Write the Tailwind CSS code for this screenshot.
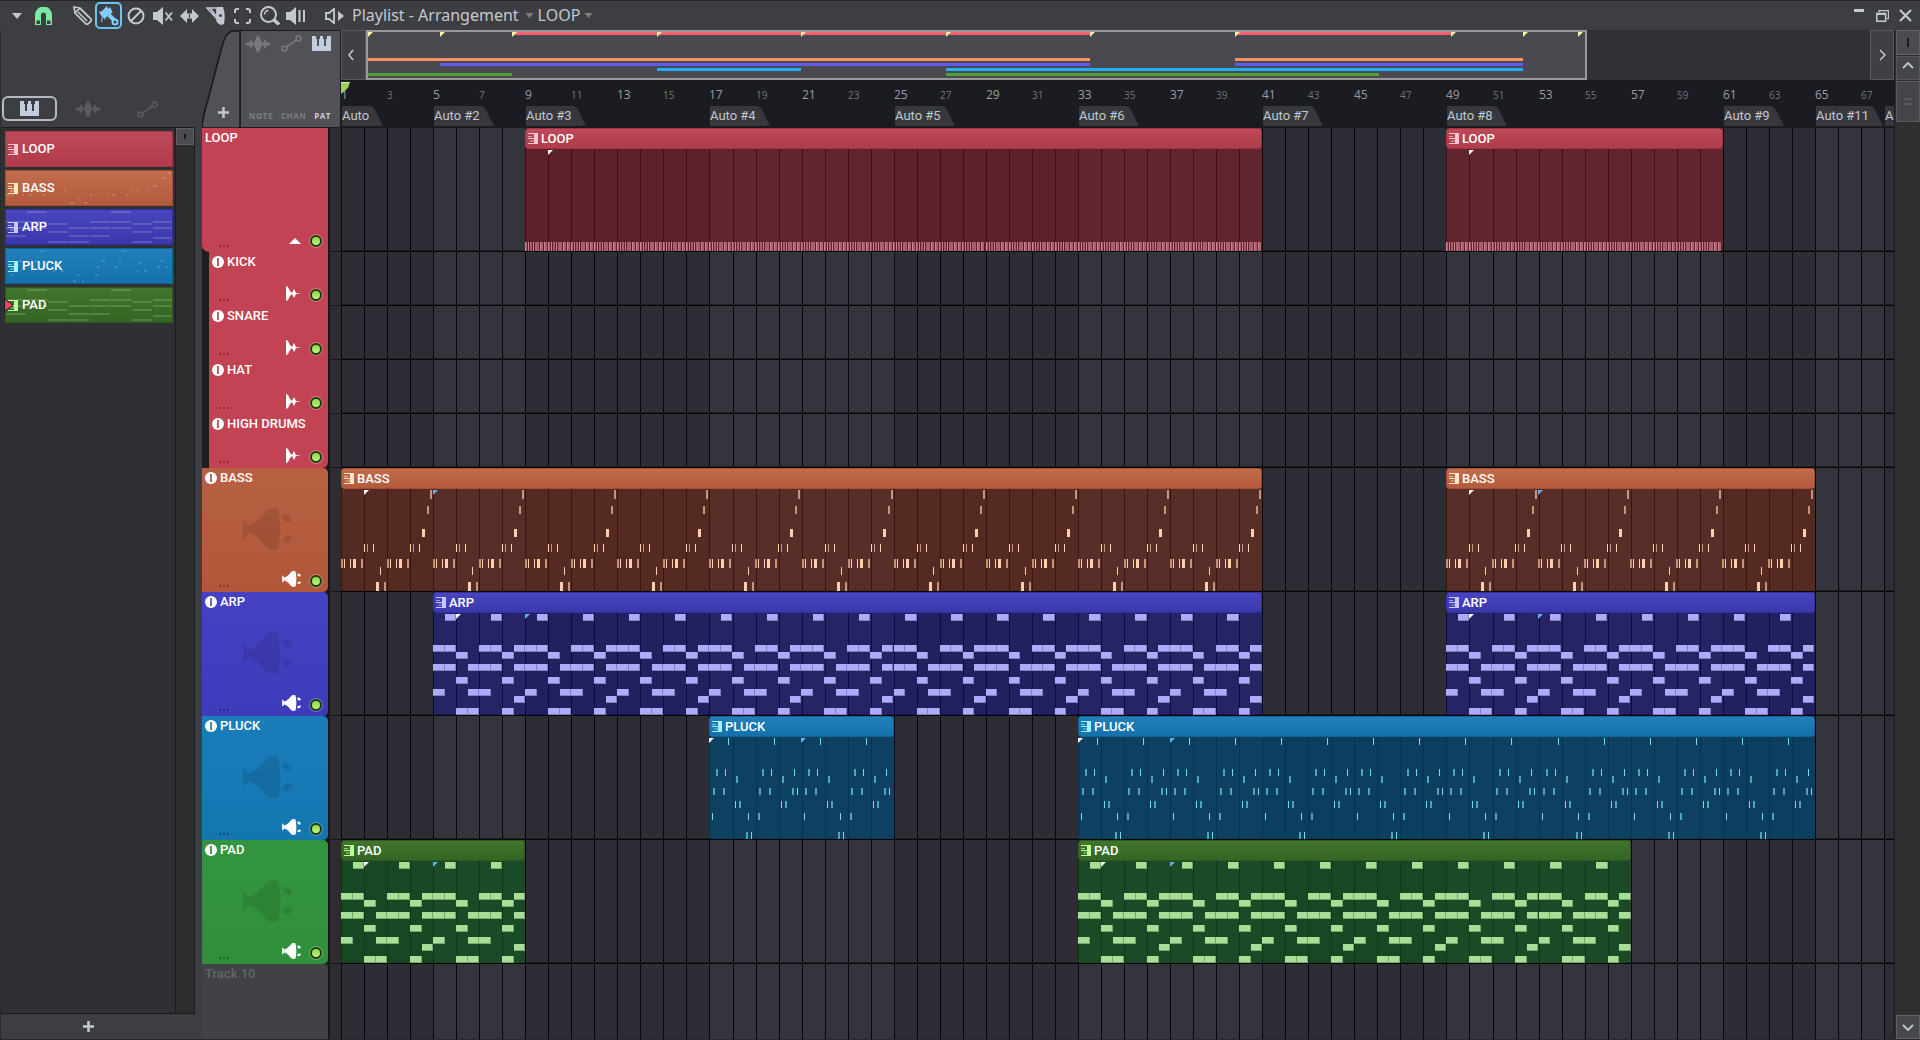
<!DOCTYPE html>
<html lang="en">
<head>
<meta charset="utf-8">
<meta name="viewport" content="width=device-width, initial-scale=1">
<title>Playlist - Arrangement</title>
<script src="https://cdn.jsdelivr.net/npm/@tailwindcss/browser@4"></script>
</head>
<body class="h-screen overflow-hidden bg-[#3d3e41] font-['Roboto',sans-serif] text-[#c3c8d0]">

<!-- Shared symbols -->
<svg class="hidden" aria-hidden="true">
  <symbol id="piano" viewBox="0 0 19 15"><path fill="currentColor" d="M0 0h4v3h1v7h2V3h1V0h3v3h1v7h2V3h1V0h4v15H0z"/></symbol>
  <symbol id="wave" viewBox="0 0 26 18"><path fill="currentColor" d="M0 9l3-2 1 1 2-4 2 4h1l2-5 2-3 2 3 2 5h1l2-4 2 4 1-1 3 2-3 2-1-1-2 4-2-4h-1l-2 5-2 3-2-3-2-5H8l-2 4-2-4-1 1z"/></symbol>
  <symbol id="auto" viewBox="0 0 21 17"><g fill="none" stroke="currentColor" stroke-width="1.600"><circle cx="3.500" cy="13.500" r="2.500"/><circle cx="17.500" cy="3.500" r="2.500"/><path d="M5.500 12l10-7"/></g></symbol>
  <symbol id="pat" viewBox="0 0 10 11"><path fill="currentColor" d="M6 0h4v11H6z"/><path stroke="currentColor" d="M0 .5h7M0 5.500h7M0 10.500h7"/><path stroke="currentColor" opacity=".7" d="M0 3.500h4M2 8h4"/></symbol>
  <symbol id="plug" viewBox="0 0 49 42"><path fill="currentColor" d="M0 11l6 6C14 15 20 6 25 1c3-1 8-1 10 0 3 12 3 28 0 40-2 1-7 1-10 0-5-5-11-14-19-16l-6 6z"/><path fill="currentColor" d="M40 7c5-1 9 2 9 7-5 1-10 0-9-7zM40 34c-1-5 4-8 9-6 0 5-4 8-9 6z"/></symbol>
  <symbol id="clip" viewBox="0 0 15 15"><path fill="currentColor" d="M0 0l2 1 2 4 2 2 2-4 2 4 5 .5-5 .5-2 4-2-4-2 2-2 4-2 1z"/></symbol>
  <symbol id="mute" viewBox="0 0 12 12"><circle cx="6" cy="6" r="6" fill="#fff"/><path d="M6 2v8" stroke="currentColor" stroke-width="1.400"/></symbol>
  <symbol id="down" viewBox="0 0 10 6"><path fill="currentColor" d="M0 0h10L5 6z"/></symbol>
</svg>

<div class="flex h-full flex-col border-y border-[#26272a]">

  <!-- Toolbar -->
  <header class="flex h-[29px] shrink-0 items-center justify-between bg-[#3d3e41]">
    <div class="flex items-center">
      <button aria-label="Menu" class="flex w-[33px] justify-center"><svg class="h-[6px] w-[10px]"><use href="#down"/></svg></button>
      <button aria-label="Snap" class="flex w-[40px] pl-[2px] text-[#7ce9a0]"><svg width="17" height="18" viewBox="0 0 17 18"><path fill="currentColor" d="M0 18V8a8.500 8.500 0 0 1 17 0v10h-6V8a2.500 2.500 0 0 0-5 0v10z"/><path fill="#3d3e41" d="M1.500 13.500H5V17H1.500zM12 13.500h3.500V17H12z"/></svg></button>
      <button aria-label="Draw" class="flex w-[22px]"><svg width="19" height="19" viewBox="0 0 19 19" fill="none" stroke="currentColor" stroke-width="1.700"><path d="M1 1l6 1 11 11c1 2-3 6-5 5L2 7zM5 6l9 9M8 3.500l8 8M2 7l5-5"/></svg></button>
      <button aria-label="Paint" class="flex h-[27px] w-[27px] items-center justify-center rounded-[5px] border-2 border-[#6fc3f2] text-[#7fd0ff]"><svg width="21" height="20" viewBox="0 0 21 20"><path fill="currentColor" d="M1 6l3-1 5-5 1 3 2-2 3 6-7 6-1 1-2-3-1 5H3l1-5z"/><path stroke="#3d3e41" stroke-width="1.200" d="M7 13l9-7"/><path stroke="currentColor" stroke-width="4" d="M11 9l5 5"/><circle cx="17" cy="16" r="2.500" fill="none" stroke="currentColor" stroke-width="2"/></svg></button>
      <button aria-label="Delete" class="flex w-[31px] pl-[5px]"><svg width="18" height="18" viewBox="0 0 18 18" fill="none" stroke="currentColor" stroke-width="2"><circle cx="9" cy="9" r="7.500"/><path d="M4 14L14 4"/></svg></button>
      <button aria-label="Mute" class="flex w-[27px]"><svg width="20" height="18" viewBox="0 0 20 18"><path fill="currentColor" d="M0 5h4l6-5v18l-6-5H0z"/><path stroke="currentColor" stroke-width="1.800" d="M12.500 5.500l6.500 8M19 5.500l-6.500 8"/></svg></button>
      <button aria-label="Slip" class="flex w-[26px]"><svg width="19" height="14" viewBox="0 0 19 14"><path fill="currentColor" d="M0 7l7-7v4.500h5V0l7 7-7 7V9.500H7V14zM9 4v6h1V4z"/></svg></button>
      <button aria-label="Slice" class="flex w-[28px]"><svg width="19" height="18" viewBox="0 0 19 18"><path fill="currentColor" d="M11 0h6c2 5 2 11 1 17l-3 1c-3-1-5-3-5-6z"/><path fill="none" stroke="currentColor" stroke-width="1.500" d="M1 1h10v11zM4 1l6 8"/><circle cx="14.500" cy="8.500" r="1.500" fill="#3d3e41"/></svg></button>
      <button aria-label="Select" class="flex w-[26px]"><svg width="17" height="16" viewBox="0 0 17 16" fill="none" stroke="currentColor" stroke-width="2"><path d="M1 5V3q0-2 2-2h2M12 1h2q2 0 2 2v2M16 11v2q0 2-2 2h-2M5 15H3q-2 0-2-2v-2"/></svg></button>
      <button aria-label="Zoom" class="flex w-[26px]"><svg width="20" height="19" viewBox="0 0 20 19" fill="none" stroke="currentColor"><circle cx="8.500" cy="8.500" r="7.500" stroke-width="2"/><path stroke-width="3.500" d="M14 14l5 4.500"/><path stroke-width="1.500" d="M4.500 8.500a4 4 0 0 1 4-4"/></svg></button>
      <button aria-label="Play" class="flex w-[39px]"><svg width="20" height="18" viewBox="0 0 20 18"><path fill="currentColor" d="M0 5h4l6-5v18l-6-5H0z"/><path stroke="currentColor" stroke-width="2" d="M13.500 3v12M18 3v12"/></svg></button>
      <button aria-label="Preview" class="flex w-[27px]"><svg width="19" height="16" viewBox="0 0 19 16"><path fill="none" stroke="currentColor" stroke-width="1.800" d="M1 5h3l5-4v14l-5-4H1z"/><path fill="currentColor" d="M13 3l6 5-6 5z"/></svg></button>
      <h1 class="pb-[2px] font-['Noto_Sans'] text-[16px] leading-5 whitespace-pre">Playlist - Arrangement</h1>
      <svg class="mr-[4px] ml-[6px] h-[5px] w-[9px] text-[#7b7d82]"><use href="#down"/></svg>
      <button class="pb-[2px] font-['Noto_Sans'] text-[16px] leading-5">LOOP</button>
      <svg class="mx-[4px] h-[5px] w-[9px] text-[#7b7d82]"><use href="#down"/></svg>
    </div>
    <div class="flex items-center gap-[10px] pr-[8px]">
      <button aria-label="Minimise" class="flex h-[14px] w-[12px]"><span class="h-[3px] w-[10px] bg-[#c3cad6]"></span></button>
      <button aria-label="Restore"><svg width="13" height="12" viewBox="0 0 13 12" fill="none" stroke="currentColor"><path stroke-width="1.200" d="M3 2.500V.6h9.400v8H10.500"/><path stroke-width="1.500" d="M.8 3.500h8.800v7.800H.8z"/><path stroke-width="2" d="M.8 4h9"/></svg></button>
      <button aria-label="Close"><svg width="13" height="13" viewBox="0 0 13 13" stroke="currentColor" stroke-width="2.200"><path d="M1 1l11 11M12 1L1 12"/></svg></button>
    </div>
  </header>

  <div class="flex min-h-0 flex-1">

    <!-- Pattern picker -->
    <aside class="flex w-[202px] shrink-0 flex-col border-l border-[#2a2b2e]">
      <div class="flex h-[97px] shrink-0 items-end gap-[18px] pb-[6px] pl-px">
        <button aria-label="Patterns" class="flex h-[25px] w-[55px] items-center justify-center rounded-[6px] border-2 border-[#b4bac6] text-[#c4cddd]"><svg class="h-[15px] w-[19px]"><use href="#piano"/></svg></button>
        <button aria-label="Audio" class="flex h-[24px] w-[26px] items-center text-[#5a5b5f]"><svg class="h-[18px] w-[26px]"><use href="#wave"/></svg></button>
        <button aria-label="Automation" class="ml-[18px] flex h-[24px] items-center text-[#5a5b5f]"><svg class="h-[17px] w-[21px]"><use href="#auto"/></svg></button>
      </div>
      <div class="mr-[7px] flex min-h-0 flex-1 border-y border-r border-[#1b1c1f] bg-[#2f3034]">
        <div id="patterns" class="flex flex-1 flex-col gap-[3px] pt-[3px] pl-[4px]"></div>
        <div class="ml-[2px] w-[19px] border-l border-[#1b1c1f] bg-[#2d2e30]">
          <div class="flex h-[17px] items-center justify-center border border-[#606165] bg-[#4a4b4f]"><span class="h-[5px] w-[2px] bg-[#1b1c1f]"></span></div>
        </div>
      </div>
      <button aria-label="Add pattern" class="flex h-[25px] shrink-0 items-center pl-[82px]"><svg width="11" height="11" viewBox="0 0 11 11" stroke="currentColor" stroke-width="2.500"><path d="M5.500 0v11M0 5.500h11"/></svg></button>
    </aside>

    <!-- Arrangement -->
    <main class="flex min-w-0 flex-1 flex-col bg-[#17181d]">
      <div class="flex h-[98px] shrink-0 bg-[#3d3e41]">
        <div class="grid w-[38px] shrink-0">
          <svg class="col-start-1 row-start-1 h-full w-full" viewBox="0 0 38 98"><path fill="#515256" stroke="#17181b" stroke-width="1.500" d="M0 98C0 88 4 78 8 62L18 24C22 8 25 1 32 1h6v97z"/></svg>
          <button aria-label="Add track" class="col-start-1 row-start-1 flex items-end justify-center pb-[10px] pl-[5px]"><svg width="11" height="11" viewBox="0 0 11 11" stroke="currentColor" stroke-width="2.500"><path d="M5.500 0v11M0 5.500h11"/></svg></button>
        </div>
        <div class="flex w-[101px] shrink-0 flex-col justify-between border-x border-y border-[#1b1c1f] bg-[#515256] pt-[4px] pb-[5px]">
          <div class="flex items-start gap-[10px] pl-[4px] text-[#77797f]">
            <button aria-label="Audio clips"><svg class="h-[18px] w-[26px]"><use href="#wave"/></svg></button>
            <button aria-label="Automation clips"><svg class="h-[17px] w-[21px]"><use href="#auto"/></svg></button>
            <button aria-label="Pattern clips" class="pt-px text-[#c4cddd]"><svg class="h-[15px] w-[19px]"><use href="#piano"/></svg></button>
          </div>
          <div class="flex gap-[8px] pl-[8px] font-['Open_Sans'] text-[8px] leading-3 font-bold tracking-[0.5px] text-[#7c7e83]">
            <button>NOTE</button><button>CHAN</button><button class="text-[#cdd0d5]">PAT</button>
          </div>
        </div>
        <div class="flex min-w-0 flex-1 flex-col">
          <div class="flex h-[50px] bg-[#303134]">
            <button aria-label="Scroll left" class="flex w-[25px] shrink-0 items-center border border-[#58595d] bg-[#3f4043] pl-[6px]"><svg width="6" height="12" viewBox="0 0 6 12" fill="none" stroke="currentColor" stroke-width="1.500"><path d="M5 1L1 6l4 5"/></svg></button>
            <div class="min-w-0 flex-1"><div id="overview" class="relative h-[50px] w-[81.2%] border-2 border-[#98999d] bg-[#494a4f]"></div></div>
            <button aria-label="Scroll right" class="flex w-[24px] shrink-0 items-center justify-center border border-[#58595d] bg-[#3f4043]"><svg width="7" height="12" viewBox="0 0 7 12" fill="none" stroke="currentColor" stroke-width="1.500"><path d="M1 1l5 5-5 5"/></svg></button>
          </div>
          <div id="ruler" class="relative min-w-0 flex-1 overflow-hidden border-t-2 border-b-2 border-[#1a1b20] bg-[#1b1c21]"></div>
        </div>
      </div>
      <div class="relative min-h-0 flex-1 overflow-hidden bg-[#2d2d35]">
        <div id="grid" class="absolute inset-y-0 right-0 left-[139px] overflow-hidden"></div>
        <div id="tracks" class="relative flex h-full flex-col"></div>
      </div>
    </main>

    <!-- Vertical scrollbar -->
    <div class="flex w-[26px] shrink-0 flex-col gap-px border-l border-[#1b1c1f] bg-[#2e2f31] pl-px">
      <div class="flex h-[25px] items-center justify-center border border-[#606165] bg-[#4a4b4f]"><span class="h-[9px] w-[2px] bg-[#1b1c1f]"></span></div>
      <button aria-label="Scroll up" class="flex h-[24px] items-center justify-center border border-[#58595d] bg-[#444548] pb-[5px]"><svg width="12" height="7" viewBox="0 0 12 7" fill="none" stroke="currentColor" stroke-width="1.800"><path d="M1 6l5-5 5 5"/></svg></button>
      <div class="flex h-[41px] flex-col items-center justify-center gap-[3px] border border-[#58595d] bg-[#444548]"><span class="h-[2px] w-[8px] bg-[#595a5e]"></span><span class="h-[2px] w-[8px] bg-[#595a5e]"></span></div>
      <div class="flex-1"></div>
      <button aria-label="Scroll down" class="flex h-[24px] items-center justify-center border border-[#606165] bg-[#47484b]"><svg width="12" height="7" viewBox="0 0 12 7" fill="none" stroke="currentColor" stroke-width="1.800"><path d="M1 1l5 5 5-5"/></svg></button>
    </div>
  </div>
</div>

<script>
const BAR = 23.03;
const at = bar => Math.round((bar - 1) * BAR);
const el = id => document.getElementById(id);
const visible = el('ruler').clientWidth;

const markers = [[1, 'Auto'], [5, 'Auto #2'], [9, 'Auto #3'], [17, 'Auto #4'], [25, 'Auto #5'], [33, 'Auto #6'], [41, 'Auto #7'], [49, 'Auto #8'], [61, 'Auto #9'], [65, 'Auto #11'], [68, 'Auto #12']];

// Note lists: [x, y, width, height, dim] over one four-bar loop of 92 px
const row = (y, h, xs) => xs.map(([x, w = 1, dim = 0]) => [x, y, w, h, dim]);
const chordRows = [[22, [1, 5]], [53, [0, 1, 4, 5, 7]], [60, [2, 6]], [72, [0, 1, 3, 4, 5, 7]], [85, [2, 6]], [97, [0, 3, 4]], [104, [7]], [116, [2, 3, 6]]];
const chords = chordRows.flatMap(([y, us]) => us.map(u => [u * 11.5, y, 11.5, 7, 0]));
const bassNotes = [
  ...row(22, 9, [[89, 2, 1]]), ...row(38, 8, [[86, 2, 1]]), ...row(61, 8, [[81, 3]]),
  ...row(76, 8, [[23], [26, 1, 1], [32], [69], [72, 1, 1], [78]]),
  ...row(91, 9, [[0, 2, 1], [3], [9], [12, 3], [20, 2, 1], [46, 2, 1], [49], [55], [58, 3], [66, 2, 1]]),
  ...row(99, 8, [[39]]), ...row(114, 9, [[35, 3], [43, 2, 1]])];
const pluckNotes = [
  ...row(22, 7, [[19], [65]]), ...row(53, 7, [[7, 2, 1], [16], [53, 2, 1], [62], [85]]),
  ...row(60, 7, [[27, 2, 1], [73, 2, 1]]), ...row(72, 7, [[4, 2, 1], [14, 2, 1], [50, 2, 1], [60, 2, 1], [83, 2, 1], [88]]),
  ...row(85, 7, [[26], [30, 2, 1], [72], [76, 2, 1]]), ...row(97, 7, [[3], [39], [49, 2, 1]]), ...row(116, 7, [[37, 2, 1], [42]])];
const beatNotes = row(114, 9, [0, 23, 46, 69].flatMap(b => [[b, 1], [b + 1, 1, 1], [b + 3, 1], [b + 5, 2, 1], [b + 8, 1], [b + 10, 4, 1], [b + 15, 1], [b + 16, 2, 1], [b + 19, 1], [b + 20, 2, 1]]));

const kinds = {
  LOOP: { head: 'bg-[#c24354]', clip: 'border-[#a53344] bg-linear-to-b from-[#bd4a59] to-[#b03b4b]', body: 'bg-[#a40f1e]/40', icon: 'text-[#ffc4d0]', note: '#cf8090', notes: beatNotes, white: 1, dots: 'text-[#8f2535]', over: '#ff6072', y: 0 },
  BASS: { head: 'bg-linear-to-b from-[#b86042] to-[#b05839]', clip: 'border-[#a54e2f] bg-linear-to-b from-[#c26b4d] to-[#b35b3c]', body: 'bg-[#8e250a]/40', icon: 'text-[#ffe9c4]', note: '#ffcfae', notes: bassNotes, white: 1, blue: 4, dots: 'text-[#7d3a22]', over: '#ff9161', y: 26 },
  ARP: { head: 'bg-linear-to-b from-[#4442c2] to-[#3e3cba]', clip: 'border-[#312e9f] bg-linear-to-b from-[#4846bd] to-[#3b38ae]', body: 'bg-[#110ca0]/40', icon: 'text-[#c9c6ff]', note: '#afabfb', notes: chords, white: 1, blue: 4, dots: 'text-[#2a2885]', over: '#5f5bf0', y: 31 },
  PLUCK: { head: 'bg-linear-to-b from-[#1a7cb9] to-[#1476b1]', clip: 'border-[#12649b] bg-linear-to-b from-[#2080b9] to-[#1470aa]', body: 'bg-[#00446e]/75', icon: 'text-[#9ff2ff]', note: '#72dcf0', notes: pluckNotes, white: 0, blue: 4, dots: 'text-[#0d4f7c]', over: '#22adf5', y: 36 },
  PAD: { head: 'bg-linear-to-b from-[#349540] to-[#2f8f3a]', clip: 'border-[#2c5a1c] bg-linear-to-b from-[#41762d] to-[#346524]', body: 'bg-[#0e561a]/65', icon: 'text-[#b9ffa0]', note: '#a8df96', notes: chords, white: 1, blue: 4, dots: 'text-[#1d5f26]', over: '#50a038', y: 41 }
};

const tracks = [
  { name: 'LOOP', kind: 'LOOP', icon: 'fold', clips: [[9, 41], [49, 61]] },
  { name: 'KICK', kind: 'LOOP', icon: 'clip', child: true, clips: [] },
  { name: 'SNARE', kind: 'LOOP', icon: 'clip', child: true, clips: [] },
  { name: 'HAT', kind: 'LOOP', icon: 'clip', child: true, clips: [] },
  { name: 'HIGH DRUMS', kind: 'LOOP', icon: 'clip', child: true, last: true, clips: [] },
  { name: 'BASS', kind: 'BASS', icon: 'plug', clips: [[1, 41], [49, 65]] },
  { name: 'ARP', kind: 'ARP', icon: 'plug', clips: [[5, 41], [49, 65]] },
  { name: 'PLUCK', kind: 'PLUCK', icon: 'plug', clips: [[17, 25], [33, 65]] },
  { name: 'PAD', kind: 'PAD', icon: 'plug', clips: [[1, 9], [33, 57]] }
];

function clipNotes(kind, width) {
  let out = '';
  for (let i = 0; i * 4 * BAR < width; i++) {
    const base = i * 4 * BAR;
    for (const [x, y, w, h, dim] of kind.notes) {
      const left = base + x;
      if (left >= width - 1) continue;
      const wide = w > 8;
      const rx = Math.round(left), rw = Math.min(wide ? Math.round(left + w) - rx : w, width - rx);
      out += `<rect x="${rx}" y="${y - 21}" width="${rw}" height="${h}" fill="${kind.note}" opacity="${dim ? .65 : 1}"/>`;
      if (wide) out += `<path d="M${rx + rw - .5} ${y - 21}v${h}M${rx} ${y - 21.5 + h}h${rw}" stroke="#000" opacity=".25"/>`;
    }
  }
  const flag = (bar, color) => bar === undefined ? '' : `<path d="M${at(bar + 1)} 1h5l-5 5z" fill="${color}"/>`;
  return out + flag(kind.white, '#fff') + flag(kind.blue, '#5fb0ff');
}

function clip(kindName, [from, to]) {
  const k = kinds[kindName], w = at(to) - at(from);
  return `<div class="absolute inset-y-0 flex flex-col" style="left:${at(from)}px;width:${w}px">
    <div class="flex h-[21px] shrink-0 items-center gap-[3px] rounded-[3px] border ${k.clip} pl-[2px] text-[13px] leading-none font-medium text-white">
      <svg class="h-[11px] w-[10px] ${k.icon}"><use href="#pat"/></svg><span>${kindName}</span>
    </div>
    <svg class="w-full flex-1 ${k.body}">${clipNotes(k, w)}</svg>
  </div>`;
}

const led = `<button aria-label="Track on" class="h-[12px] w-[12px] rounded-full border-2 border-[#1f4210] bg-linear-to-b from-[#93d84a] to-[#bdf07c] ring-1 ring-white/30"></button>`;

function trackRow(t) {
  const k = kinds[t.kind];
  const icons = {
    fold: '<svg class="mb-[3px] h-[6px] w-[12px] text-white" viewBox="0 0 12 6"><path fill="currentColor" d="M0 6L6 0l6 6z"/></svg>',
    clip: '<svg class="h-[15px] w-[15px] text-white"><use href="#clip"/></svg>',
    plug: '<svg class="h-[16px] w-[19px] text-white"><use href="#plug"/></svg>'
  };
  const corners = t.child ? (t.last ? 'rounded-br-[6px]' : '') : t.icon === 'fold' ? 'rounded-tr-[5px] rounded-bl-[7px]' : 'rounded-r-[5px]';
  const under = t.icon === 'fold' ? 'bg-linear-to-r from-[#1c1e20] from-5% to-[#c24354] to-5%' : t.child ? 'bg-[#1c1e20]' : 'bg-[#17171c]';
  return `<div class="flex shrink-0 ${t.child ? 'h-[54px]' : 'h-[124px]'}">
    <div class="flex w-[126px] shrink-0 ${under} ${t.child ? 'pl-[7px]' : ''}">
      <div class="relative flex flex-1 flex-col justify-between ${k.head} ${corners}">
        ${t.icon === 'plug' ? '<svg class="absolute top-[40px] left-[41px] h-[42px] w-[49px] text-black/10"><use href="#plug"/></svg>' : ''}
        <div class="flex items-center gap-[3px] pt-[2px] pl-[3px] text-[13px] leading-4 font-medium text-white">
          ${t.icon === 'fold' ? '' : '<button aria-label="Mute track" class="' + k.dots + '"><svg class="h-[12px] w-[12px]"><use href="#mute"/></svg></button>'}
          <span>${t.name}</span>
        </div>
        <div class="flex items-end gap-[9px] pr-[6px] pb-[5px]">
          <svg class="mr-auto h-[2px] w-[10px] ${t.child ? 'ml-[10px]' : 'ml-[17px]'} ${k.dots}"><path fill="currentColor" d="M0 0h2v2H0zM4 0h2v2H4zM8 0h2v2H8z"/></svg>
          ${icons[t.icon]}${led}
        </div>
      </div>
    </div>
    <div class="w-[2px] shrink-0 bg-[#17171c]"></div>
    <div class="w-[11px] shrink-0 border-b border-[#15151b] bg-[#2e2c31]"></div>
    <div class="relative min-w-0 flex-1 border-b border-[#060609] shadow-[inset_0_-1px_0_rgba(0,0,0,0.35)]">${t.clips.map(c => clip(t.kind, c)).join('')}</div>
  </div>`;
}

el('tracks').innerHTML = tracks.map(trackRow).join('') + `<div class="flex min-h-0 flex-1">
  <div class="w-[126px] shrink-0 rounded-tr-[5px] bg-[#414246] pt-[2px] pl-[3px] text-[13px] leading-4 font-medium text-[#646569]">Track 10</div>
  <div class="w-[2px] shrink-0 bg-[#17171c]"></div><div class="w-[11px] shrink-0 bg-[#2e2c31]"></div></div>`;

// Alternate shading between markers, then one line per bar
let grid = '';
markers.forEach(([bar], i) => {
  if (i % 2 && markers[i + 1]) grid += `<div class="absolute inset-y-0 bg-[#34343d]" style="left:${at(bar)}px;width:${at(markers[i + 1][0]) - at(bar)}px"></div>`;
});
for (let b = 1; at(b) < visible; b++) grid += `<div class="absolute inset-y-0 w-px bg-[#08080e]" style="left:${at(b)}px"></div>`;
el('grid').innerHTML = grid;

let ruler = '';
for (let b = 1; at(b) + 9 < visible; b += 2) {
  const major = b % 4 === 1;
  ruler += `<span class="absolute top-[5px] font-['Open_Sans'] leading-4 ${major ? 'text-[12px] text-[#9b9da3]' : 'text-[10px] text-[#73757b]'}" style="left:${at(b)}px">${b}</span>`;
}
ruler += '<svg class="absolute top-0 left-0 h-[12px] w-[9px]" viewBox="0 0 9 12"><path fill="#a5cf55" d="M0 0h9L7 6 0 12z"/><path fill="none" stroke="#dcf59b" d="M0 .5h8.500"/></svg>';
ruler += markers.map(([bar, label]) => `<div class="absolute bottom-0 flex h-[20px] text-[13px] leading-5 whitespace-nowrap" style="left:${at(bar) + 1}px"><span class="bg-[#37383d]">${label}</span><svg class="h-[20px] w-[14px]" viewBox="0 0 14 20"><path fill="#37383d" d="M0 0c4 0 5 2 7 6l7 14H0z"/></svg></div>`).join('');
el('ruler').innerHTML = ruler;

// Song overview, scaled so that the box spans the whole arrangement
const pct = bars => bars / 67.42 * 100;
el('overview').innerHTML = tracks.flatMap(t => t.clips.map(([a, b]) =>
  `<span class="absolute h-[3px]" style="top:${kinds[t.kind].y}px;left:${pct(a - 1)}%;width:${pct(b - a)}%;background:${kinds[t.kind].over}"></span>`)).join('') +
  markers.map(([b]) => `<svg class="absolute top-0 h-[5px] w-[5px]" viewBox="0 0 5 5" style="left:${pct(b - 1)}%"><path fill="#fff7a0" d="M0 0h5L0 5z"/></svg>`).join('');

// Pattern picker buttons, each with a faint preview of its notes
el('patterns').innerHTML = Object.entries(kinds).map(([name, k]) => {
  const ghost = name === 'LOOP' ? '' : k.notes.map(([x, y, w]) => `<rect x="${Math.round(x * 1.82)}" y="${Math.round(1 + (y - 22) / 3.1)}" width="${w > 8 ? 20 : w + 1}" height="2"/>`).join('');
  return `<button class="relative flex h-[36px] w-[168px] items-center gap-[4px] border ${k.clip} pl-[2px] text-[13px] font-medium text-white">
    <svg class="absolute inset-0 h-full w-full" fill="#fff" opacity=".15">${ghost}</svg>
    <svg class="h-[11px] w-[10px] ${k.icon}"><use href="#pat"/></svg><span>${name}</span>
    ${name === 'PAD' ? '<svg class="absolute top-[10px] left-[-2px] h-[14px] w-[10px]" viewBox="0 0 10 14"><path fill="#f0415c" stroke="#1b1c21" d="M.5.5L9 7 .5 13.500z"/></svg>' : ''}
  </button>`;
}).join('');
</script>
</body>
</html>
